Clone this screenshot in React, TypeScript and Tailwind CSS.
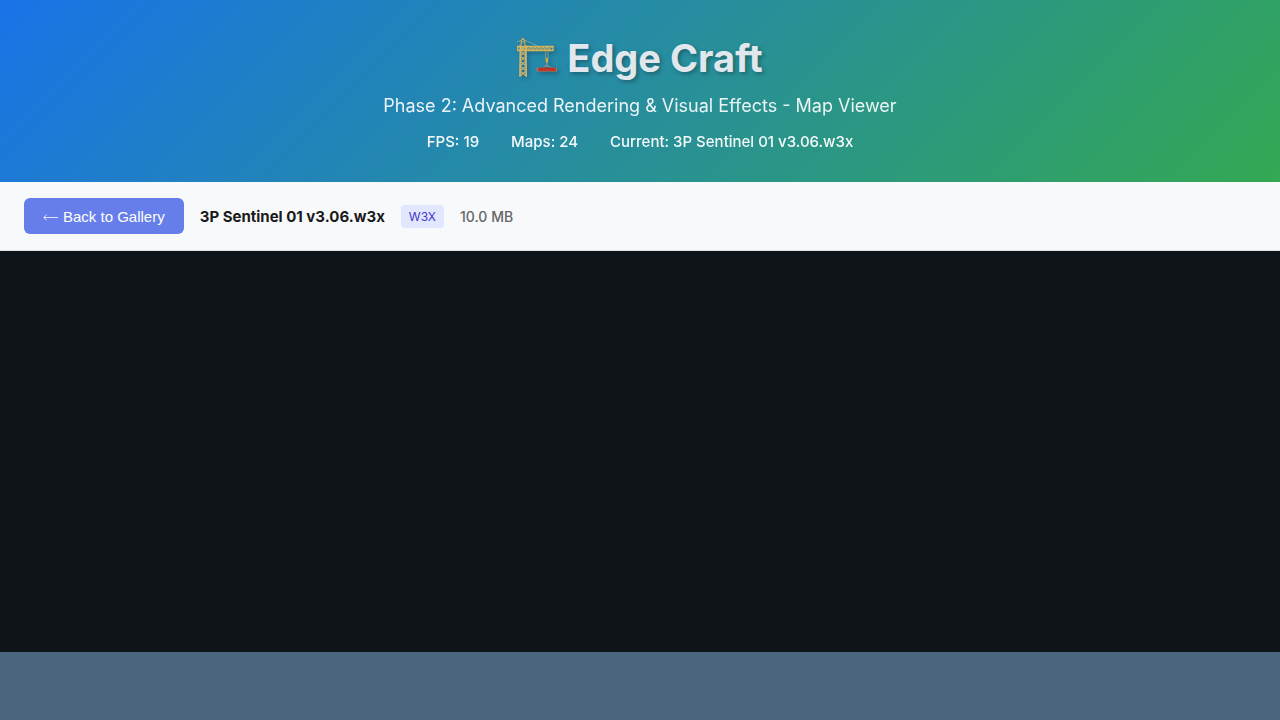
import React from "react";

const mastRows = [6, 11, 16, 21, 26, 31];
const jibCols = [10, 14, 18, 22, 26, 30];

function CraneIcon() {
  return (
    <svg viewBox="0 0 42 42" className="h-[42px] w-[42px] shrink-0 opacity-90 drop-shadow-[2px_2px_2px_rgba(0,0,0,0.3)]" fill="none" aria-hidden="true">
      <path d="M6 2.5 L0 5 M6 2.5 L20 8.5" stroke="#8fb0b5" strokeWidth="0.8" />
      <path d="M4.2 8 V4 L5.5 1.6 H6.5 L7.8 4 V8 M4.2 5 H7.8" stroke="#d9ad4c" strokeWidth="1.2" />
      <path d="M3.4 8 L3 39.8 M8.8 8 L9.2 39.8" stroke="#e3bd68" strokeWidth="1.7" />
      {mastRows.map((y) => (
        <path key={y} d={`M3 ${y + 3} L9.2 ${y + 8} M9.2 ${y + 3} L3 ${y + 8}`} stroke="#dab669" strokeWidth="1.3" />
      ))}
      <path d="M0 9.6 H36.5 M0 13.4 H36.5" stroke="#eabb55" strokeWidth="1.7" />
      <path d="M0.6 9 V14 M4 9 V14 M9 9 V14 M36 9 V14" stroke="#eabb55" strokeWidth="1.3" />
      {jibCols.map((x) => (
        <path key={x} d={`M${x} 9.5 L${x + 2} 13.5 L${x + 4} 9.5`} stroke="#dfb65b" strokeWidth="1.2" />
      ))}
      <path d="M28.6 14 V22 M31 14 V22" stroke="#a4a993" strokeWidth="0.8" />
      <path d="M28 15 H32" stroke="#6a7f82" strokeWidth="1" />
      <path d="M28.6 21 H31 L31.4 24 L30.2 26.5 L28.6 25 Z" fill="#dfae3b" />
      <path d="M29.9 26 V29.5 M29.9 28 L24.5 32 M29.9 28 L35.5 32" stroke="#8c979a" strokeWidth="1.1" />
      <path d="M19.5 30.8 H40 V34.6 H19.5 Z" fill="#9e7f77" />
      <path d="M21 30.8 H39 V34.2 H21 Z" fill="#dc2c12" />
      <path d="M24 32.6 L26 31.1 H34 L36 32.6" stroke="#93301f" strokeWidth="0.8" />
    </svg>
  );
}

function Header() {
  return (
    <header className="flex flex-col items-center bg-linear-[135deg,#1a73e8,#34a853] px-8 pt-8 pb-7 text-white">
      <h1 className="flex h-[52px] items-center gap-2 text-[38px] font-bold text-[#e1e8ed] text-shadow-[2px_2px_4px_rgba(0,0,0,0.3)]">
        <CraneIcon />
        Edge Craft
      </h1>
      <p className="mt-2 text-[18px] leading-[27px] opacity-90">
        Phase 2: Advanced Rendering &amp; Visual Effects - Map Viewer
      </p>
      <div className="mt-[11px] mb-px flex gap-8 text-[15px] leading-[23px] font-medium opacity-95">
        <span>FPS: 19</span>
        <span>Maps: 24</span>
        <span>Current: 3P Sentinel 01 v3.06.w3x</span>
      </div>
    </header>
  );
}

function MapToolbar() {
  return (
    <div className="flex items-center gap-4 border-b border-[#e0e0e0] bg-[#f8f9fb] px-6 py-4">
      <button type="button" className="flex h-9 items-center gap-1 rounded-md bg-[#667eea] px-[19px] pt-0.5 font-['Liberation_Sans',Arial,sans-serif] text-[15px] leading-[22px] text-white">
        <svg viewBox="0 0 16 10" className="h-[10px] w-4" fill="none" stroke="currentColor" aria-hidden="true">
          <path d="M0.8 5.5 H15" strokeWidth="0.9" opacity="0.85" />
          <path d="M3.6 2.9 L0.8 5.5 L3.6 8.1" strokeWidth="0.9" />
        </svg>
        Back to Gallery
      </button>
      <strong className="pt-0.5 text-[15px] leading-6 font-bold text-[#1a1a1a]">3P Sentinel 01 v3.06.w3x</strong>
      <span className="rounded bg-[#e0e7ff] px-2 py-1 text-[12px] leading-[15px] text-[#4338ca]">W3X</span>
      <span className="text-[14px] font-medium text-[#666666]">10.0 MB</span>
    </div>
  );
}

export default function App() {
  return (
    <div className="flex min-h-screen flex-col bg-[#0f1419] font-[Inter,sans-serif]">
      <Header />
      <main className="flex flex-1 flex-col">
        <MapToolbar />
        <section aria-label="Map view" className="flex flex-1 flex-col justify-end">
          <div className="h-[68px] bg-[#4d667f]" />
        </section>
      </main>
    </div>
  );
}
